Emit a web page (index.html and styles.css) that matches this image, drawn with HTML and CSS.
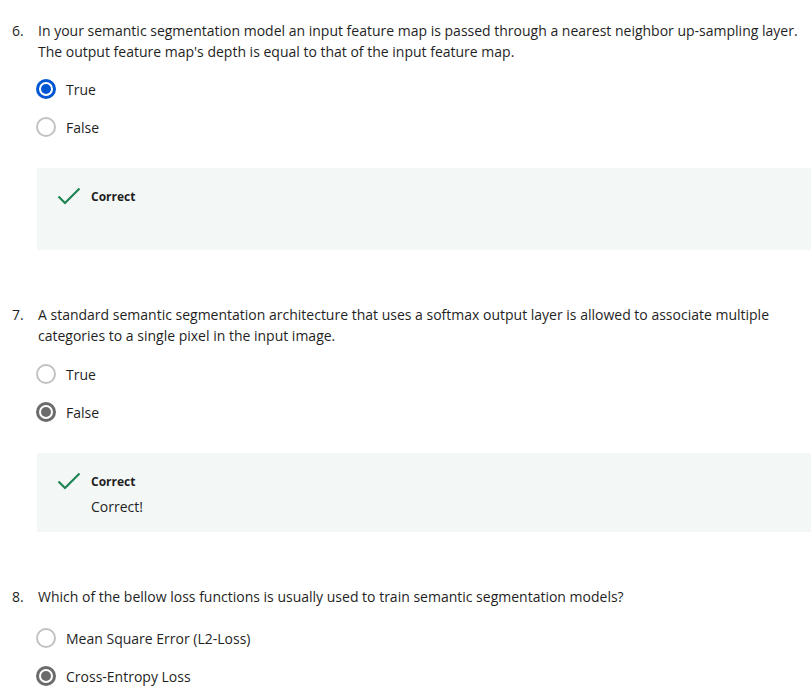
FILE: index.html
```html
<!DOCTYPE html>
<html>
<head>
<meta charset="utf-8">
<link rel="stylesheet" href="styles.css">
</head>
<body>
<div class="quiz">
  <section class="q q6">
    <div class="prompt"><span class="num">6.</span><div class="text">In your semantic segmentation model an input feature map is passed through a nearest neighbor up-sampling layer. The output feature map's depth is equal to that of the input feature map.</div></div>
    <div class="options opts-tight">
      <div class="opt"><span class="radio sel-blue"></span><span>True</span></div>
      <div class="opt"><span class="radio"></span><span>False</span></div>
    </div>
    <div class="feedback fb-empty">
      <div class="fb-head"><svg class="check" width="24" height="20" viewBox="0 0 24 20"><path d="M1.5 10.5 L8 17 L22.5 2.5" fill="none" stroke="#1f8354" stroke-width="2.2"/></svg><span class="fb-title">Correct</span></div>
      <div class="fb-text"></div>
    </div>
  </section>
  <section class="q">
    <div class="prompt"><span class="num">7.</span><div class="text">A standard semantic segmentation architecture that uses a softmax output layer is allowed to associate multiple categories to a single pixel in the input image.</div></div>
    <div class="options">
      <div class="opt"><span class="radio"></span><span>True</span></div>
      <div class="opt"><span class="radio sel-gray"></span><span>False</span></div>
    </div>
    <div class="feedback">
      <div class="fb-head"><svg class="check" width="24" height="20" viewBox="0 0 24 20"><path d="M1.5 10.5 L8 17 L22.5 2.5" fill="none" stroke="#1f8354" stroke-width="2.2"/></svg><span class="fb-title">Correct</span></div>
      <div class="fb-text">Correct!</div>
    </div>
  </section>
  <section class="q">
    <div class="prompt"><span class="num">8.</span><div class="text">Which of the bellow loss functions is usually used to train semantic segmentation models?</div></div>
    <div class="options opts-loose">
      <div class="opt"><span class="radio"></span><span>Mean Square Error (L2-Loss)</span></div>
      <div class="opt"><span class="radio sel-gray"></span><span>Cross-Entropy Loss</span></div>
    </div>
  </section>
</div>
</body>
</html>
```
FILE: styles.css
```css
html, body {
  margin: 0;
  padding: 0;
  background: #ffffff;
}
body {
  font-family: "Open Sans", "Liberation Sans", sans-serif;
  font-size: 14px;
  line-height: 21px;
  color: #1f1f1f;
  overflow: hidden;
}
.quiz {
  padding-top: 20px;
}
.q {
  margin-bottom: 54px;
}
.prompt {
  display: flex;
  padding-left: 12px;
  padding-right: 8px;
}
.num {
  width: 26px;
  flex: none;
}
.text {
  flex: 1;
}
.options {
  margin-top: 9px;
  padding-left: 36px;
}
.options.opts-tight {
  margin-top: 8px;
}
.options.opts-loose {
  margin-top: 12px;
}
.opt {
  display: flex;
  align-items: center;
  gap: 10px;
  height: 38px;
}
.radio {
  width: 20px;
  height: 20px;
  box-sizing: border-box;
  border-radius: 50%;
  border: 2px solid #c2c2c2;
  flex: none;
  display: flex;
  align-items: center;
  justify-content: center;
}
.radio.sel-blue {
  border: 3px solid #0056d2;
}
.radio.sel-blue::after {
  content: "";
  width: 10px;
  height: 10px;
  border-radius: 50%;
  background: #0056d2;
}
.radio.sel-gray {
  border: 3px solid #6b6b6b;
}
.radio.sel-gray::after {
  content: "";
  width: 10px;
  height: 10px;
  border-radius: 50%;
  background: #6b6b6b;
}
.feedback {
  margin-top: 22px;
  margin-left: 37px;
  background: #f3f8f6;
  padding: 18px 20px 15px 20px;
}
.fb-empty {
  padding-bottom: 18px;
}
.fb-head {
  display: flex;
  align-items: center;
  height: 20px;
}
.check {
  display: block;
  margin-right: 10px;
}
.fb-title {
  font-size: 12px;
  font-weight: 700;
  color: #1f1f1f;
}
.fb-text {
  margin-top: 6px;
  padding-left: 34px;
  line-height: 20px;
  min-height: 20px;
}
```
